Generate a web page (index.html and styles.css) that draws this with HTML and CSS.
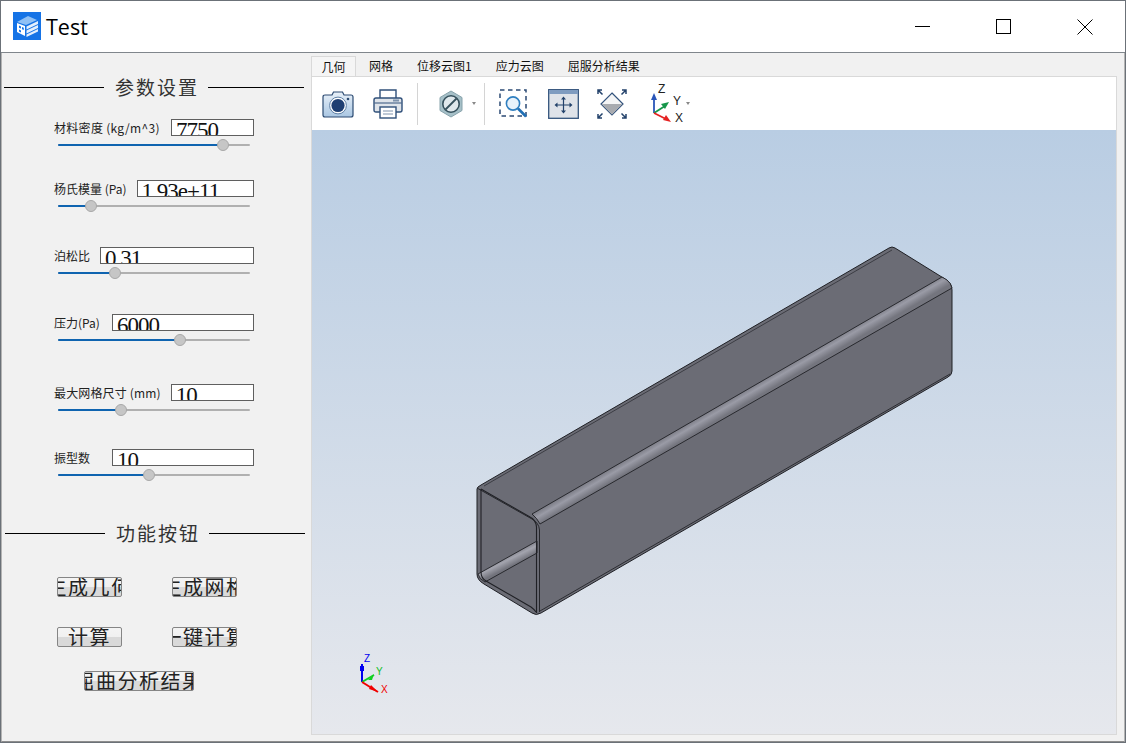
FILE: index.html
```html
<!DOCTYPE html>
<html lang="zh">
<head>
<meta charset="utf-8">
<title>Test</title>
<link rel="stylesheet" href="styles.css">
</head>
<body>
<div class="window">
  <header class="titlebar">
    <svg class="logo" viewBox="0 0 28 28">
      <rect width="28" height="28" fill="#1573e6"/>
      <path d="M4 10 L15 4 L24 8 L13 13 Z" fill="#8fc0f5"/>
      <path d="M4 11 L12 14 V24 L4 20 Z" fill="#fff"/>
      <path d="M6 13.5 L8 14.4 V16.6 L6 15.7 Z M9 15 L10.8 15.8 V18 L9 17.2 Z M6 17.5 L8 18.4 V20.4 L6 19.5 Z" fill="#1573e6"/>
      <path d="M13.5 14.5 L25 9 V12 L13.5 17.5 Z M13.5 18.5 L25 13 V16 L13.5 21.5 Z M13.5 22.5 L25 17 V19.5 L13.5 25 Z" fill="#e4effc"/>
    </svg>
    <span class="app-title">Test</span>
    <div class="controls">
      <svg class="ctl" viewBox="0 0 16 16"><path d="M0 7.5 H15" stroke="#000" fill="none"/></svg>
      <svg class="ctl" viewBox="0 0 16 16"><rect x=".5" y=".5" width="14" height="14" stroke="#000" fill="none"/></svg>
      <svg class="ctl" viewBox="0 0 16 16"><path d="M.5 .5 L15.5 15.5 M15.5 .5 L.5 15.5" stroke="#000" fill="none"/></svg>
    </div>
  </header>
  <div class="content">
    <aside class="sidebar">
      <div class="heading heading-params"><span class="heading-text">参数设置</span></div>

      <div class="field field-1">
        <div class="row"><label class="label label-long">材料密度 (kg/m^3)</label><div class="input">7750</div></div>
        <div class="slider"><div class="fill" style="width:165px"></div><div class="knob" style="left:165px"></div></div>
      </div>
      <div class="field field-2">
        <div class="row"><label class="label">杨氏模量 (Pa)</label><div class="input">1.93e+11</div></div>
        <div class="slider"><div class="fill" style="width:33px"></div><div class="knob" style="left:33px"></div></div>
      </div>
      <div class="field field-3">
        <div class="row"><label class="label">泊松比</label><div class="input">0.31</div></div>
        <div class="slider"><div class="fill" style="width:57px"></div><div class="knob" style="left:57px"></div></div>
      </div>
      <div class="field field-4">
        <div class="row"><label class="label label-wide">压力(Pa)</label><div class="input">6000</div></div>
        <div class="slider"><div class="fill" style="width:122px"></div><div class="knob" style="left:122px"></div></div>
      </div>
      <div class="field field-5">
        <div class="row"><label class="label label-mesh">最大网格尺寸 (mm)</label><div class="input">10</div></div>
        <div class="slider"><div class="fill" style="width:63px"></div><div class="knob" style="left:63px"></div></div>
      </div>
      <div class="field field-6">
        <div class="row"><label class="label label-wide">振型数</label><div class="input">10</div></div>
        <div class="slider"><div class="fill" style="width:91px"></div><div class="knob" style="left:91px"></div></div>
      </div>

      <div class="heading heading-actions"><span class="heading-text">功能按钮</span></div>

      <div class="btn-row btn-row-1">
        <button class="btn">生成几何</button>
        <button class="btn">生成网格</button>
      </div>
      <div class="btn-row btn-row-2">
        <button class="btn">计算</button>
        <button class="btn">一键计算</button>
      </div>
      <div class="btn-row btn-row-3">
        <button class="btn btn-wide">屈曲分析结果</button>
      </div>
    </aside>

    <main class="main">
      <nav class="tabs">
        <span class="tab tab-active">几何</span>
        <span class="tab tab-2">网格</span>
        <span class="tab tab-3">位移云图1</span>
        <span class="tab tab-4">应力云图</span>
        <span class="tab tab-5">屈服分析结果</span>
      </nav>
      <div class="pane">
        <div class="toolbar">
          <svg class="tool t-camera" width="32" height="28" viewBox="0 0 32 28">
            <defs><linearGradient id="cam" x1="0" y1="0" x2="0" y2="1"><stop offset="0" stop-color="#e9f1f9"/><stop offset="1" stop-color="#a9c6e2"/></linearGradient></defs>
            <path d="M10 5 L11.5 2 H20.5 L22 5 H29 Q31 5 31 7 V25 Q31 27 29 27 H3 Q1 27 1 25 V7 Q1 5 3 5 Z" fill="url(#cam)" stroke="#2c4b72" stroke-width="1.2"/>
            <circle cx="16" cy="15.5" r="8.4" fill="#fff" stroke="#5e7fa5"/>
            <circle cx="16" cy="15.5" r="6.6" fill="#1f3f72"/>
            <circle cx="26" cy="9" r="1.3" fill="#2c4b72"/>
          </svg>
          <svg class="tool t-print" width="30" height="31" viewBox="0 0 30 31">
            <path d="M7 11 V2 H23 V11" fill="#fff" stroke="#30507a" stroke-width="1.4"/>
            <path d="M3 10 H27 Q29 10 29 12 V22 Q29 24 27 24 H3 Q1 24 1 22 V12 Q1 10 3 10 Z" fill="#dfe4ea" stroke="#30507a" stroke-width="1.4"/>
            <path d="M1.5 15 H28.5" stroke="#30507a"/>
            <rect x="20" y="11.5" width="6" height="2" fill="#7f93ad"/>
            <rect x="7" y="19" width="16" height="11" fill="#fff" stroke="#30507a" stroke-width="1.4"/>
            <path d="M10 23 H20 M10 26 H20" stroke="#7f93ad"/>
          </svg>
          <span class="sep sep-1"></span>
          <svg class="tool t-hex" width="24" height="28" viewBox="0 0 24 28">
            <path d="M12 1 L23 7.500 V20.500 L12 27 L1 20.500 V7.500 Z" fill="#a6c0c8" stroke="#86a2ab"/>
            <circle cx="12" cy="14" r="8.2" fill="#dfe8ec" stroke="#35505c" stroke-width="1.6"/>
            <path d="M6.500 19.500 L17.500 8.500" stroke="#35505c" stroke-width="1.8"/>
          </svg>
          <span class="caret caret-1"></span>
          <span class="sep sep-2"></span>
          <svg class="tool t-zoom" width="30" height="30" viewBox="0 0 30 30">
            <rect x="1" y="1" width="26" height="26" fill="none" stroke="#2b4a74" stroke-width="1.5" stroke-dasharray="4.5 3.5"/>
            <circle cx="14" cy="14.5" r="6.6" fill="#e8f2fb" stroke="#2f7fc0" stroke-width="1.6"/>
            <path d="M19 19.5 L27 27.5" stroke="#1f6fb5" stroke-width="2.6"/>
          </svg>
          <svg class="tool t-fit" width="31" height="30" viewBox="0 0 31 30">
            <rect x=".7" y=".7" width="29.6" height="28.6" fill="#dfe3e9" stroke="#33537c" stroke-width="1.3"/>
            <rect x="1" y="1" width="29" height="4" fill="#7f9cc0"/>
            <path d="M15.5 9 V23 M8.5 16 H22.5" stroke="#23426b" stroke-width="1.2"/>
            <path d="M15.5 7.5 L13 10.5 H18 Z M15.5 24.5 L13 21.5 H18 Z M6.5 16 L9.5 13.5 V18.5 Z M24.5 16 L21.5 13.5 V18.5 Z" fill="#23426b"/>
          </svg>
          <svg class="tool t-diamond" width="30" height="30" viewBox="0 0 30 30">
            <path d="M15 4 L26 15 L15 26 L4 15 Z" fill="#f4f5f6" stroke="#33537c" stroke-width="1.2"/>
            <path d="M4.6 15 H25.4 L15 25.4 Z" fill="#a8abb0"/>
            <path d="M1 5 V1 H5 M1 1 L5.500 5.500 M29 5 V1 H25 M29 1 L24.500 5.500 M1 25 V29 H5 M1 29 L5.500 24.500 M29 25 V29 H25 M29 29 L24.500 24.500" fill="none" stroke="#23426b" stroke-width="1.5"/>
          </svg>
          <svg class="tool t-axis" width="36" height="42" viewBox="0 0 36 42">
            <path d="M5 30 V14" stroke="#2a55b8" stroke-width="1.800"/>
            <path d="M5 10 L2 17 H8 Z" fill="#2a55b8"/>
            <path d="M5 30 L16 23" stroke="#16964a" stroke-width="1.800"/>
            <path d="M20 19 L12 21 L16 26 Z" fill="#16964a"/>
            <path d="M5 30 L17 36" stroke="#e52222" stroke-width="1.800"/>
            <path d="M22 39 L14 37 L17 32 Z" fill="#e52222"/>
            <text x="9" y="10" class="axis-label">Z</text>
            <text x="24" y="22" class="axis-label">Y</text>
            <text x="26" y="39" class="axis-label">X</text>
          </svg>
          <span class="caret caret-2"></span>
        </div>
        <div class="viewport">
          <svg class="scene" viewBox="312 130 804 603" width="804" height="603">
            <defs>
              <linearGradient id="band" gradientUnits="userSpaceOnUse" x1="738" y1="392" x2="745" y2="404">
                <stop offset="0" stop-color="#70717a"/>
                <stop offset=".5" stop-color="#9a9ba6"/>
                <stop offset="1" stop-color="#74757e"/>
              </linearGradient>
              <linearGradient id="band2" gradientUnits="userSpaceOnUse" x1="505" y1="554" x2="511" y2="566">
                <stop offset="0" stop-color="#6f7079"/>
                <stop offset=".5" stop-color="#a3a4ae"/>
                <stop offset="1" stop-color="#72737c"/>
              </linearGradient>
            </defs>
            <path d="M477 489 Q477 487 481 485 L889 248 Q892 246 895 248 L945 279 Q952 283 952 290 V371 Q952 375 948 377 L541 613 Q536 616 532 613 L484 584 Q477 580 477 574 Z" fill="#6b6c75" stroke="#1f2025" stroke-width="1"/>
            <path d="M532 514 L942 277 L947 280 Q951 283 952 288 L540 524 Q537 518 532 514 Z" fill="url(#band)" stroke="#1f2025" stroke-width=".9"/>
            <path d="M478 574 L537 541 V553 L485 582 Q479 579 478 574 Z" fill="url(#band2)" stroke="#1f2025" stroke-width=".9"/>
            <path d="M481 489 L530 517 Q536 520 536.500 527 V613" fill="none" stroke="#1f2025" stroke-width="1.100"/>
            <path d="M477 488 L532 519 Q539 523 539.500 530 V612" fill="none" stroke="#26272c" stroke-width="1"/>
            <path d="M481 489 V572 Q481 578 486 581 L531 607 Q535 610 536 612" fill="none" stroke="#1f2025" stroke-width="1.100"/>
            <path d="M484 486 L892 250" fill="none" stroke="#3c3d44" stroke-width="1"/>
            <path d="M540 611 L950 374" fill="none" stroke="#2b2c31" stroke-width="1"/>
            <path d="M362 682 V664" stroke="#0000f0" stroke-width="2"/>
            <rect x="360" y="666" width="4" height="5" fill="#0000f0"/>
            <path d="M362 682 L374 675" stroke="#10d020" stroke-width="2"/>
            <path d="M368 680 L374 674 L372 680 Z" fill="#10d020"/>
            <path d="M362 682 L378 692" stroke="#f00000" stroke-width="2"/>
            <path d="M371 685 L378 692 L369 689 Z" fill="#f00000"/>
            <text x="364" y="662" class="t-z">Z</text>
            <text x="376" y="675" class="t-y">Y</text>
            <text x="381" y="693" class="t-x">X</text>
          </svg>
        </div>
      </div>
    </main>
  </div>
</div>
</body>
</html>
```
FILE: styles.css
```css
* { box-sizing: border-box; }
html, body { margin: 0; padding: 0; }
body {
  width: 1126px;
  height: 743px;
  overflow: hidden;
  font-family: "Noto Sans CJK SC", "Liberation Sans", sans-serif;
  background: #f1f1f1;
}
.window {
  width: 1126px;
  height: 743px;
  border: 1px solid #6b7178;
  display: flex;
  flex-direction: column;
}
.titlebar {
  height: 52px;
  flex: none;
  background: #fff;
  border-bottom: 1px solid #80868c;
  display: flex;
  align-items: center;
  padding: 0 0 1px 12px;
}
.logo { width: 28px; height: 28px; flex: none; }
.app-title {
  margin-left: 5px;
  font: 21.500px "Open Sans", "Liberation Sans", sans-serif;
  color: #000;
}
.controls {
  margin-left: auto;
  align-self: flex-start;
  margin-top: 18px;
  display: flex;
  padding-right: 32px;
  gap: 65px;
}
.ctl { width: 16px; height: 16px; display: block; }

.content {
  flex: 1;
  display: flex;
  min-height: 0;
  background: #f1f1f1;
  border-left: 1px solid #b4b4b4;
  border-right: 1px solid #b4b4b4;
  border-bottom: 1px solid #8d8d8d;
}
.sidebar { width: 308px; flex: none; }

.heading {
  display: flex;
  align-items: center;
  height: 26px;
  gap: 11px;
  width: 300px;
}
.heading::before, .heading::after {
  content: "";
  height: 1px;
  background: #000;
}
.heading::before { width: 100px; flex: none; }
.heading::after { flex: 1; }
.heading-text {
  font-size: 19px;
  letter-spacing: 2px;
  line-height: 26px;
  color: #333;
  margin-right: -2px;
}
.heading-params { margin: 21px 0 0 2px; }
.heading-actions { margin: 44px 0 0 3px; }

.field { padding-left: 52px; }
.field-1 { margin-top: 19px; }
.field-2 { margin-top: 34px; }
.field-3 { margin-top: 40px; }
.field-4 { margin-top: 40px; }
.field-5 { margin-top: 43px; }
.field-6 { margin-top: 38px; }

.row {
  display: flex;
  align-items: center;
  gap: 10px;
  height: 17px;
  width: 200px;
}
.label {
  font-size: 12px;
  line-height: 17px;
  color: #222;
  white-space: nowrap;
  flex: none;
}
.label-wide { min-width: 48px; }
.label-long { min-width: 107px; letter-spacing: .3px; }
.label-mesh { min-width: 106px; letter-spacing: .15px; }
.input {
  flex: 1;
  min-width: 0;
  height: 17px;
  border: 1px solid #5f5f5f;
  background: #fff;
  overflow: hidden;
  padding-left: 4px;
  font: 23px/21px "Liberation Serif", serif;
  letter-spacing: -1px;
  color: #111;
  white-space: nowrap;
}
.slider {
  position: relative;
  margin: 8px 0 0 4px;
  width: 192px;
  height: 2px;
  background: #b0b0b0;
  border-radius: 1px;
}
.fill { height: 2px; background: #0f64b0; border-radius: 1px; }
.knob {
  position: absolute;
  top: -5px;
  width: 12px;
  height: 12px;
  margin-left: -6px;
  border-radius: 50%;
  background: #c6c6c6;
  border: 1px solid #a8a8a8;
}

.btn-row { display: flex; gap: 50px; }
.btn-row-1 { padding-left: 55px; margin-top: 31px; }
.btn-row-2 { padding-left: 55px; margin-top: 30px; }
.btn-row-3 { padding-left: 82px; margin-top: 24px; }
.btn {
  width: 65px;
  height: 20px;
  padding: 0;
  display: flex;
  align-items: center;
  justify-content: center;
  overflow: hidden;
  white-space: nowrap;
  border: 1px solid #858585;
  border-radius: 2px;
  background: linear-gradient(#f4f4f4 0, #f0f0f0 50%, #d9d9d9 50%, #d9d9d9 100%);
  font-family: "Noto Sans CJK SC", sans-serif;
  font-size: 20px;
  letter-spacing: 1.500px;
  line-height: 18px;
  color: #222;
}
.btn-wide { width: 110px; }

.main { flex: 1; min-width: 0; display: flex; flex-direction: column; padding: 3px 8px 0 1px; }
.tabs {
  display: flex;
  height: 20px;
  flex: none;
  align-items: flex-end;
}
.tab {
  height: 20px;
  font-size: 12px;
  line-height: 20px;
  color: #111;
  white-space: nowrap;
  flex: none;
}
.tab-active {
  width: 45px;
  text-align: center;
  background: #f5f5f5;
  border: 1px solid #d9d9d9;
  border-bottom: 0;
}
.tab-2 { margin-left: 13px; }
.tab-3 { margin-left: 24px; }
.tab-4 { margin-left: 24px; }
.tab-5 { margin-left: 24px; }

.pane {
  flex: 1;
  min-height: 0;
  display: flex;
  flex-direction: column;
  border: 1px solid #d9d9d9;
  background: #fff;
  width: 806px;
  margin-bottom: 6px;
}
.toolbar {
  height: 53px;
  flex: none;
  background: #fff;
  display: flex;
  align-items: center;
}
.tool { display: block; flex: none; }
.t-camera { margin-left: 10px; }
.t-print { margin-left: 19px; }
.sep { width: 1px; height: 42px; background: #d4d4d4; flex: none; }
.sep-1 { margin-left: 14px; }
.t-hex { margin-left: 21px; }
.caret {
  width: 0; height: 0; flex: none;
  border-left: 2.500px solid transparent;
  border-right: 2.500px solid transparent;
  border-top: 3px solid #888;
}
.caret-1 { margin-left: 9px; }
.sep-2 { margin-left: 8px; }
.t-zoom { margin-left: 14px; }
.t-fit { margin-left: 19px; }
.t-diamond { margin-left: 18px; }
.t-axis { margin-left: 22px; }
.caret-2 { margin-left: 1px; }
.axis-label { font: 12px "Liberation Sans", sans-serif; fill: #222; }

.viewport {
  flex: 1;
  min-height: 0;
  background: linear-gradient(#b9cde3 0%, #e6e8ed 100%);
  overflow: hidden;
}
.scene { display: block; }
.t-z { font: 10px "Liberation Sans", sans-serif; fill: #0000f0; }
.t-y { font: 10px "Liberation Sans", sans-serif; fill: #10c020; }
.t-x { font: 10px "Liberation Sans", sans-serif; fill: #f00000; }
```
